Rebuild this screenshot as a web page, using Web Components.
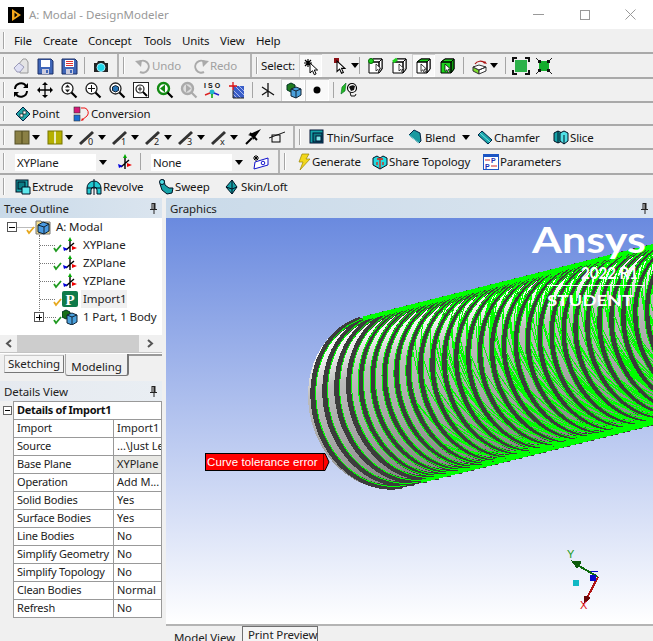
<!DOCTYPE html>
<html>
<head>
<meta charset="utf-8">
<title>DesignModeler</title>
<style>
  html, body { margin: 0; padding: 0; width: 653px; height: 641px; overflow: hidden; background: #f0f0f0; }
  body { font: 11.5px "Noto Sans", "Open Sans", sans-serif; color: #1a1a1a; }
  .main { display: flex; height: 443px; }
</style>
</head>
<body>
<title-bar></title-bar>

<tool-bar h="25">
  <tool-grip w="14"></tool-grip>
  <tool-item text="File" w="29"></tool-item><tool-item text="Create" w="45"></tool-item><tool-item text="Concept" w="56"></tool-item><tool-item text="Tools" w="38"></tool-item><tool-item text="Units" w="38"></tool-item><tool-item text="View" w="36"></tool-item><tool-item text="Help" w="40"></tool-item>
</tool-bar>

<tool-bar h="25">
  <tool-grip w="13"></tool-grip>
  <tool-item icon="new" w="24"></tool-item><tool-item icon="save" w="24"></tool-item><tool-item icon="saveas" w="23"></tool-item>
  <tool-sep w="9"></tool-sep>
  <tool-item icon="camera" w="24"></tool-item>
  <tool-end w="18"></tool-end>
  <tool-item icon="undo" text="Undo" w="58" off></tool-item><tool-item icon="redo" text="Redo" w="57" off></tool-item>
  <tool-end w="11"></tool-end>
  <tool-item text="Select:" w="38"></tool-item>
  <tool-item icon="pickstar" w="23" pressed></tool-item>
  <tool-sep w="11" blank></tool-sep>
  <tool-item icon="pickmode" w="26" caret></tool-item>
  <tool-sep w="9"></tool-sep>
  <tool-item icon="vertex" w="24"></tool-item><tool-item icon="edge" w="20"></tool-item><tool-item icon="face" w="23" pressed></tool-item>
  <tool-sep w="5" blank></tool-sep>
  <tool-item icon="body" w="23"></tool-item>
  <tool-sep w="9"></tool-sep>
  <tool-item icon="cuberot" w="33" caret></tool-item>
  <tool-sep w="8"></tool-sep>
  <tool-item icon="grow" w="23"></tool-item><tool-item icon="shrink" w="20"></tool-item>
</tool-bar>

<tool-bar h="24">
  <tool-grip w="13"></tool-grip>
  <tool-item icon="rotate" w="24"></tool-item><tool-item icon="pan" w="24"></tool-item><tool-item icon="zoomud" w="24"></tool-item><tool-item icon="zoomplus" w="24"></tool-item><tool-item icon="zoomcube" w="24"></tool-item><tool-item icon="zoombox" w="24"></tool-item><tool-item icon="prev" w="24"></tool-item><tool-item icon="next" w="23"></tool-item><tool-item icon="iso" w="25"></tool-item><tool-item icon="ruler" w="23"></tool-item>
  <tool-sep w="8"></tool-sep>
  <tool-item icon="triad" w="21"></tool-item><tool-item icon="cube" w="24" pressed></tool-item><tool-item icon="dot" w="24" pressed></tool-item>
  <tool-sep w="4" blank></tool-sep>
  <tool-sep w="8"></tool-sep>
  <tool-item icon="flat" w="24"></tool-item>
</tool-bar>

<tool-bar h="23">
  <tool-grip w="15"></tool-grip>
  <tool-item icon="point" text="Point" w="59"></tool-item><tool-item icon="conversion" text="Conversion" w="90"></tool-item>
</tool-bar>

<tool-bar h="24">
  <tool-grip w="14"></tool-grip>
  <tool-item icon="col1" w="33" caret></tool-item><tool-item icon="col2" w="33" caret></tool-item><tool-item icon="ln0" w="33" caret></tool-item><tool-item icon="ln1" w="33" caret></tool-item><tool-item icon="ln2" w="33" caret></tool-item><tool-item icon="ln3" w="33" caret></tool-item><tool-item icon="lnx" w="33" caret></tool-item><tool-item icon="arrow" w="24"></tool-item><tool-item icon="square" w="24"></tool-item>
  <tool-end w="16"></tool-end>
  <tool-item icon="thin" text="Thin/Surface" w="99" gap="2"></tool-item><tool-item icon="blend" text="Blend" w="69" caret></tool-item><tool-item icon="chamfer" text="Chamfer" w="76"></tool-item><tool-item icon="slice" text="Slice" w="60"></tool-item>
</tool-bar>

<tool-bar h="25">
  <tool-grip w="15"></tool-grip>
  <plane-combo value="XYPlane"></plane-combo>
  <tool-sep w="7" blank></tool-sep>
  <tool-item icon="plane" w="23"></tool-item>
  <tool-sep w="11"></tool-sep>
  <plane-combo value="None"></plane-combo>
  <tool-sep w="7" blank></tool-sep>
  <tool-item icon="newsketch" w="25"></tool-item>
  <tool-end w="18"></tool-end>
  <tool-item icon="bolt" text="Generate" w="76" gap="0"></tool-item><tool-item icon="share" text="Share Topology" w="111"></tool-item><tool-item icon="params" text="Parameters" w="90"></tool-item>
</tool-bar>

<tool-bar h="23" flat>
  <tool-grip w="15"></tool-grip>
  <tool-item icon="extrude" text="Extrude" w="71"></tool-item><tool-item icon="revolve" text="Revolve" w="72"></tool-item><tool-item icon="sweep" text="Sweep" w="66"></tool-item><tool-item icon="skin" text="Skin/Loft" w="80"></tool-item>
</tool-bar>

<div class="main">
  <left-pane>
    <pane-header label="Tree Outline" active></pane-header>
    <tree-view>
      <tree-row icon="modal" label="A: Modal" check="#e6a81e" root expander="minus"></tree-row>
      <tree-row icon="plane" label="XYPlane" check="#1f9a1f"></tree-row>
      <tree-row icon="plane" label="ZXPlane" check="#1f9a1f"></tree-row>
      <tree-row icon="plane" label="YZPlane" check="#1f9a1f"></tree-row>
      <tree-row icon="import" label="Import1" check="#e6a81e" selected></tree-row>
      <tree-row icon="part" label="1 Part, 1 Body" check="#1f9a1f" expander="plus" last></tree-row>
    </tree-view>
    <h-scroll></h-scroll>
    <mode-tabs></mode-tabs>
    <pane-header label="Details View" style="margin-top:5px"></pane-header>
    <details-table></details-table>
  </left-pane>
  <graphics-pane></graphics-pane>
</div>

<script>
const cursor = (x, y, s) => `<path transform="translate(${x} ${y}) scale(${s})" d="M0 0v10l2.500-2.300 1.800 4 1.800-.8-1.800-3.900h3.300z" fill="#fff" stroke="#000" stroke-width="1"/>`
const mag = inner => `<circle cx="6.500" cy="6.500" r="5.500" fill="#fff" stroke="#222" stroke-width="1.300"/><path d="M10.500 10.500l5 5" stroke="#000" stroke-width="2.200"/>${inner}`
const box = (fr, top, side, extra) => `<path d="M1 4l4-3h9v10l-3 4H1z" fill="${fr}" stroke="#000"/><path d="M1 4l4-3h9l-3 3z" fill="${top}" stroke="#000"/><path d="M11 4l3-3v10l-3 4z" fill="${side}" stroke="#000"/><path d="M1 4h10v11" fill="none" stroke="#000"/>${extra || ''}`
const floppy = label => `<path d="M1 1h13l2 2v13H1z" fill="#3f66b8" stroke="#1d2f66"/><rect x="4" y="2" width="9" height="7" fill="#fff"/>${label}<rect x="5" y="11" width="7" height="5" fill="#ccd"/><rect x="9" y="12" width="2" height="3" fill="#3f66b8"/>`
const slant = d => `<path d="M0 15L13 3" stroke="#333" stroke-width="3"/><text x="8" y="15.500" font-size="9" font-family="Noto Sans" fill="#222">${d}</text>`
const blueCube = `<path d="M3 6l5-3 6 2v7l-5 3-6-2z" fill="#4a9ae0" stroke="#123"/><path d="M3 6l6 2 5-3M9 8v7" fill="none" stroke="#123"/>`
const axes = `<path d="M8 4v11M4 13l8-7" stroke="#000" stroke-width="1.400"/><path d="M8 0l-2 4h4z" fill="#0a0"/><path d="M1 10l5 2-4 2z" fill="#00d"/><path d="M15 11l-5-2v4z" fill="#e00"/>`

const ICONS = {
  new: `<path d="M5 7l5-6h3l2 3v11H7z" fill="#e4e4e4" stroke="#999"/><path d="M1 10l5-5 5 4-4 5H4z" fill="#dfe0f4" stroke="#9a9ab8"/>`,
  save: floppy(''),
  saveas: floppy(`<path d="M5 3.500h7M5 5.500h7M5 7.500h7" stroke="#d33" stroke-width="1"/>`),
  camera: `<path d="M1 5h3l1-2h6l1 2h3v9H1z" fill="#222"/><circle cx="8" cy="9.500" r="4" fill="#1fd6e8" stroke="#aef"/>`,
  undo: `<path d="M4 4a6 6 0 1 1 1 10" fill="none" stroke="#aaa" stroke-width="2"/><path d="M0 3l7-1-1 7z" fill="#aaa"/>`,
  redo: `<path d="M12 4a6 6 0 1 0-1 10" fill="none" stroke="#aaa" stroke-width="2"/><path d="M16 3l-7-1 1 7z" fill="#aaa"/>`,
  pickstar: `<path d="M5 1v8M1 5h8M2 2l6 6M8 2L2 8" stroke="#000" stroke-width="1.200"/>${cursor(7, 5, 1)}`,
  pickmode: `<rect x="1" y="0" width="5" height="5" fill="#8b0f14"/>${cursor(4, 3, 1.050)}`,
  vertex: box('#fff', '#fff', '#fff', `<circle cx="3" cy="3" r="2.500" fill="#1dd41d" stroke="#060"/>${cursor(8, 6, .7)}`),
  edge: box('#fff', '#fff', '#fff', `<path d="M1 4l4-3" stroke="#1dd41d" stroke-width="3"/>${cursor(7, 6, .7)}`),
  face: box('#fff', '#1dd41d', '#fff', cursor(5, 6, .75)),
  body: box('#1dd41d', '#1dd41d', '#0d9d0d', cursor(5, 6, .75)),
  cuberot: `<path d="M3 6a6 5 0 0 1 10-1" fill="none" stroke="#a11" stroke-width="1.200"/><path d="M15 6l-4-1 2-2z" fill="#a11"/><path d="M1 9l6 3v4l-6-3z" fill="#7ddc2c" stroke="#333"/><path d="M7 12l7-3v4l-7 3zM1 9l6-2 7 2-7 3z" fill="#fff" stroke="#333"/>`,
  grow: `<rect x="2" y="2" width="12" height="12" fill="#2cb24a"/><path d="M0 4V0h4M12 0h4v4M16 12v4h-4M4 16H0v-4" fill="none" stroke="#111" stroke-width="2"/>`,
  shrink: `<path d="M0 0l16 16M16 0L0 16" stroke="#222"/><rect x="3" y="3" width="10" height="10" fill="#13ad2c"/><path d="M2 2h3v3H2zM11 2h3v3h-3zM2 11h3v3H2zM11 11h3v3h-3z" fill="#111"/>`,
  rotate: `<path d="M2 7a6 6 0 0 1 11-3M14 9a6 6 0 0 1-11 3" fill="none" stroke="#000" stroke-width="2"/><path d="M15 1v5h-5zM1 15v-5h5z" fill="#000"/>`,
  pan: `<path d="M8 1v14M1 8h14" stroke="#000" stroke-width="1.300"/><path d="M8 0l-3 3h6zM8 16l-3-3h6zM0 8l3-3v6zM16 8l-3-3v6z" fill="#000"/>`,
  zoomud: mag(`<path d="M6.500 2.500l-2.500 3h5zM6.500 10.500l-2.500-3h5z" fill="#222"/>`),
  zoomplus: mag(`<path d="M6.500 3v7M3 6.500h7" stroke="#111"/>`),
  zoomcube: mag(`<path d="M3.500 5l3-1.500 3 1.500v3.500l-3 1.500-3-1.500z" fill="#2b77b8" stroke="#123"/>`),
  zoombox: `<rect x=".5" y=".5" width="15" height="15" fill="#fff" stroke="#222"/><circle cx="7" cy="7" r="4" fill="none" stroke="#222" stroke-width="1.200"/><path d="M10 10l4 4" stroke="#000" stroke-width="2"/><path d="M7 4.500v5M5 7h4" stroke="#222"/>`,
  prev: `<circle cx="6.500" cy="6.500" r="5.500" fill="#fff" stroke="#138a13" stroke-width="2.400"/><path d="M10.500 10.500l5 5" stroke="#000" stroke-width="2.200"/><path d="M3 6.500l5-4v8z" fill="#138a13"/>`,
  next: `<circle cx="6.500" cy="6.500" r="5.500" fill="#ddd" stroke="#aaa" stroke-width="2.400"/><path d="M10.500 10.500l5 5" stroke="#aaa" stroke-width="2.200"/><path d="M10 6.500l-5-4v8z" fill="#aaa"/>`,
  iso: `<text x="0" y="6" font-size="7" font-weight="700" font-family="Liberation Sans" fill="#111" textLength="16">ISO</text><circle cx="8" cy="10" r="2.500" fill="#22b5cc"/><path d="M1 13l5-2" stroke="#d22" stroke-width="1.500"/><path d="M15 13l-5-2" stroke="#22c" stroke-width="1.500"/><path d="M8 12v4" stroke="#0a0" stroke-width="1.500"/>`,
  ruler: `<path d="M4 4h11v12H4z" fill="#3a5ec8"/><path d="M6 4l9 9M10 4l5 5M4 8l8 8M4 12l4 4" stroke="#a9b9ee"/><path d="M0 4h8M4 0v8" stroke="#d11" stroke-width="1.300"/><path d="M4 8v8h11" fill="none" stroke="#222"/>`,
  triad: `<path d="M8 1v14M2 5l12 8M2 13l6-4" stroke="#111" stroke-width="1.300"/>`,
  cube: `<path d="M2 3l4-2 4 2v5l-4 2-4-2z" fill="#1f7a1f" stroke="#032"/><path d="M6 7l5-2 5 2v6l-5 3-5-2z" fill="#4aa0dc" stroke="#123"/><path d="M6 7l5 2 5-2M11 9v7" fill="none" stroke="#123"/>`,
  dot: `<circle cx="8" cy="8" r="3.500" fill="#000"/>`,
  flat: `<path d="M0 12l1-7 4-4-1 8z" fill="#23b823" stroke="#062" stroke-width=".6"/><circle cx="11" cy="6" r="4.500" fill="#fff" stroke="#000" stroke-width="1.200"/><path d="M8 5a4 3 0 0 1 6-1l-1 4-3 1z" fill="#111"/><path d="M9 10l1 4h4l1-2" fill="none" stroke="#111"/>`,
  point: `<path d="M8 1l7 7-7 7-7-7z" fill="#23a5a8" stroke="#024"/><rect x="5" y="8" width="3" height="3" fill="#fff" stroke="#000" stroke-width=".6"/><rect x="8" y="5" width="3" height="3" fill="#fff" stroke="#000" stroke-width=".6"/>`,
  conversion: `<rect x="0" y="1" width="6" height="6" fill="#d41a78" stroke="#333" stroke-width=".6"/><rect x="0" y="9" width="6" height="6" fill="#1a6fd4" stroke="#333" stroke-width=".6"/><path d="M7 2h4a5 5 0 0 1 2 8l-5 4" fill="none" stroke="#e11"/><path d="M7 15l1-3 2 2z" fill="#e11"/>`,
  col1: `<rect x="1" y="2" width="14" height="13" fill="#8a8045"/><path d="M8 2v13" stroke="#4a4515"/><rect x="1" y="2" width="14" height="13" fill="none" stroke="#555028"/>`,
  col2: `<rect x="1" y="2" width="14" height="13" fill="#b5b000"/><path d="M8 2v13" stroke="#fff" stroke-width="1.500"/><rect x="1" y="2" width="14" height="13" fill="none" stroke="#777400"/>`,
  ln0: slant('0'), ln1: slant('1'), ln2: slant('2'), ln3: slant('3'), lnx: slant('x'),
  arrow: `<path d="M1 15l6-6" stroke="#000" stroke-width="2"/><path d="M16 0L3 6l3 1 1 1 1 3z" fill="#000"/><path d="M5 4l7 7" stroke="#000" stroke-width="2"/>`,
  square: `<rect x="3" y="6" width="8" height="7" fill="none" stroke="#000"/><path d="M0 9l16-6" stroke="#000" stroke-width=".9"/>`,
  thin: `<rect x="1" y="1" width="13" height="13" fill="#16a3a8" stroke="#013"/><rect x="4" y="4" width="9" height="9" fill="#0c7f86" stroke="#013"/><rect x="7" y="7" width="5" height="5" fill="#7fe6e8" stroke="#013"/>`,
  blend: `<path d="M1 6l5-5 6 3 1 8-2 2z" fill="#1b9aa0" stroke="#024"/><path d="M1 6l10 8" stroke="#7fe6e8"/>`,
  chamfer: `<path d="M1 6l4-4 10 9-4 4z" fill="#16a3a8" stroke="#024"/><path d="M3 4l10 9" stroke="#7fe6e8"/>`,
  slice: `<path d="M1 4l4-2 4 2v8l-4 2-4-2z" fill="#16a3a8" stroke="#012"/><path d="M7 4l4-2 4 2v8l-4 3-4-3z" fill="#4fe0e6" stroke="#012"/><path d="M5 2v12M11 6v9" stroke="#012"/>`,
  plane: axes,
  newsketch: `<path d="M2 8l13-4v7L1 15z" fill="#fff" stroke="#11c"/><circle cx="10" cy="9" r="1.800" fill="none" stroke="#11c"/><path d="M3 1v6M0 4h6M1 2l4 4M5 2L1 6" stroke="#000"/>`,
  bolt: `<path d="M6 0h7l-3 5h4L4 16l3-8H3z" fill="#f2d71c" stroke="#9a8400" stroke-width=".7"/>`,
  share: `<path d="M1 4l4-2 3 2 3-2 4 2v7l-7 4-7-4z" fill="#22dbe0" stroke="#012"/><path d="M5 5h6M8 5v9M5 8v3M11 8v3" stroke="#d21" stroke-width="1.300" fill="none"/>`,
  params: `<rect x=".5" y=".5" width="15" height="15" fill="#fff" stroke="#1c55c4"/><rect x="1" y="1" width="14" height="2" fill="#1c55c4"/><text x="8" y="9" font-size="7" font-weight="700" font-family="Liberation Sans" fill="#1c2fb0">P</text><text x="2" y="15" font-size="7" font-weight="700" font-family="Liberation Sans" fill="#1c2fb0">P</text><path d="M2 6h5M8 12h6" stroke="#c22"/>`,
  extrude: `<rect x="1" y="1" width="12" height="12" fill="#16a3a8" stroke="#012"/><rect x="3" y="3" width="7" height="7" fill="#0c7f86" stroke="#012"/><path d="M7 8h8v7H7z" fill="#5fe8ec" stroke="#012"/>`,
  revolve: `<path d="M1 15V9a7 7 0 0 1 14 0v6h-4v-4a3 3 0 0 0-6 0v4z" fill="#22c8d0" stroke="#012"/><path d="M8 0v16M1 9h14" stroke="#012"/>`,
  sweep: `<path d="M3 1h3l1 5 4 3h4l-1 5-5 1-5-4-2-6z" fill="#16a3a8" stroke="#012"/><circle cx="4" cy="3" r="2.500" fill="#4fe0e6" stroke="#012"/>`,
  skin: `<path d="M8 1l5 7-5 7-6-7z" fill="#16a3a8" stroke="#012"/><path d="M8 1v14M2 8l6 2 5-2" fill="none" stroke="#012"/>`,
  modal: `<path d="M1 2h5l1 1h8v12H1z" fill="#f2dc8a" stroke="#777"/>${blueCube}`,
  import: `<rect x="0" y="0" width="16" height="16" rx="2" fill="#0f7a4a"/><text x="8" y="14" font-size="15" font-weight="700" font-family="Liberation Serif" text-anchor="middle" fill="#fff">P</text>`,
  part: `<path d="M0 3l4-2 4 2v5l-4 2-4-2z" fill="#176f17" stroke="#032"/><path d="M5 6l5-2 5 2v7l-5 3-5-2z" fill="#4aa0dc" stroke="#123"/><path d="M5 6l5 2 5-2M10 8v8" fill="none" stroke="#123"/>`
}

class TitleBar extends HTMLElement {
  constructor () {
    super()
    this.attachShadow({ mode: 'open' }).innerHTML = `
      <style>
        :host { display: flex; align-items: center; height: 29px; background: #fff; color: #999; font-size: 11.500px; }
        svg { flex: none; display: block; }
        span { margin-left: 5px; flex: 1; }
      </style>
      <svg width="16" height="16" style="margin-left:8px"><rect width="16" height="16" fill="#000"/><path d="M4 2l9 6-9 6z" fill="#f5a81c"/><path d="M6.500 5.500l3 2.500-3 2.500z" fill="#000"/></svg>
      <span>A: Modal - DesignModeler</span>
      <svg width="11" height="2" style="margin-right:36px"><rect width="11" height="1" y="0" fill="#999"/></svg>
      <svg width="10" height="10" style="margin-right:35px"><rect x=".5" y=".5" width="9" height="9" fill="none" stroke="#999"/></svg>
      <svg width="11" height="11" style="margin-right:17px"><path d="M.5.500l10 10M10.500.500l-10 10" stroke="#999"/></svg>`
  }
}
customElements.define('title-bar', TitleBar)

class ToolBar extends HTMLElement {
  constructor () {
    super()
    this.attachShadow({ mode: 'open' }).innerHTML = `
      <style>
        :host { display: flex; align-items: stretch; box-sizing: border-box; background: #f0f0f0; border-bottom: 2px solid #a9a9a9; white-space: nowrap; }
        :host([flat]) { border-bottom: 0; }
      </style>
      <slot></slot>`
  }

  connectedCallback () {
    this.style.height = this.getAttribute('h') + 'px'
  }
}
customElements.define('tool-bar', ToolBar)

class ToolGrip extends HTMLElement {
  constructor () {
    super()
    this.attachShadow({ mode: 'open' }).innerHTML = `
      <style>
        :host { display: block; flex: none; position: relative; }
        i { display: block; margin: 3px 0 3px 3px; width: 1px; height: calc(100% - 6px); background: #a5a5a5; box-shadow: 1px 0 #fff; }
      </style>
      <i></i>`
  }

  connectedCallback () {
    this.style.width = this.getAttribute('w') + 'px'
  }
}
customElements.define('tool-grip', ToolGrip)

class ToolEnd extends HTMLElement {
  constructor () {
    super()
    this.attachShadow({ mode: 'open' }).innerHTML = `
      <style>
        :host { display: block; flex: none; box-sizing: border-box; border-left: 2px solid #b4b4b4; }
        i { display: block; margin: 3px 0 3px 4px; width: 1px; height: calc(100% - 6px); background: #a5a5a5; box-shadow: 1px 0 #fff; }
      </style>
      <i></i>`
  }

  connectedCallback () {
    this.style.width = this.getAttribute('w') + 'px'
  }
}
customElements.define('tool-end', ToolEnd)

class ToolSep extends HTMLElement {
  constructor () {
    super()
    this.attachShadow({ mode: 'open' }).innerHTML = `
      <style>
        :host { display: block; flex: none; }
        i { display: block; margin-top: 3px; width: 1px; height: calc(100% - 6px); background: #a5a5a5; }
        :host([blank]) i { display: none; }
      </style>
      <i></i>`
  }

  connectedCallback () {
    this.style.width = this.getAttribute('w') + 'px'
  }
}
customElements.define('tool-sep', ToolSep)

class ToolItem extends HTMLElement {
  constructor () {
    super()
    this.attachShadow({ mode: 'open' })
  }

  connectedCallback () {
    const icon = this.getAttribute('icon')
    const text = this.getAttribute('text')
    const gap = this.getAttribute('gap') || 1
    this.style.width = this.getAttribute('w') + 'px'
    this.shadowRoot.innerHTML = `
      <style>
        :host { display: flex; flex: none; align-items: center; box-sizing: border-box; height: 100%; font-size: 11.500px; letter-spacing: -.15px; color: #151515; }
        :host([off]) { color: #a0a0a0; }
        :host([pressed]) { background: #f9f9f9; box-shadow: inset 1px 1px #d0d0d0, inset -1px -1px #fff; justify-content: center; }
        svg { display: block; flex: none; overflow: visible; }
        span { margin-left: ${icon ? gap : 0}px; }
        .caret { margin-left: 2px; }
        :host([text][caret]) .caret { margin-left: 7px; }
      </style>
      ${icon ? `<svg width="16" height="16" viewBox="0 0 16 16">${ICONS[icon]}</svg>` : ''}
      ${text ? `<span>${text}</span>` : ''}
      ${this.hasAttribute('caret') ? '<svg class="caret" width="8" height="5"><path d="M0 0h8L4 5z" fill="#000"/></svg>' : ''}`
  }
}
customElements.define('tool-item', ToolItem)

class PlaneCombo extends HTMLElement {
  constructor () {
    super()
    this.attachShadow({ mode: 'open' })
  }

  connectedCallback () {
    this.shadowRoot.innerHTML = `
      <style>
        :host { display: flex; flex: none; align-items: center; width: 95px; height: 17px; margin-top: 4px; background: #fff; font-size: 11.500px; letter-spacing: -.25px; }
        span { flex: 1; padding-left: 2px; }
        b { display: flex; align-items: center; justify-content: center; width: 14px; height: 100%; background: #f0f0f0; }
      </style>
      <span>${this.getAttribute('value')}</span>
      <b><svg width="8" height="5"><path d="M0 0h8L4 5z" fill="#000"/></svg></b>`
  }
}
customElements.define('plane-combo', PlaneCombo)

class LeftPane extends HTMLElement {
  constructor () {
    super()
    this.attachShadow({ mode: 'open' }).innerHTML = `
      <style>:host { display: block; flex: none; width: 162px; margin-right: 4px; background: #f0f0f0; }</style>
      <slot></slot>`
  }
}
customElements.define('left-pane', LeftPane)

class PaneHeader extends HTMLElement {
  constructor () {
    super()
    this.attachShadow({ mode: 'open' })
  }

  connectedCallback () {
    this.shadowRoot.innerHTML = `
      <style>
        :host { display: flex; align-items: center; justify-content: space-between; height: 20px; padding: 0 5px 0 4px; font-size: 11.500px; letter-spacing: -.1px; background: linear-gradient(90deg, #e6eaf0, #e9eef3); color: #222; }
        :host([active]) { background: linear-gradient(90deg, #c9dae9, #dbe5ef); }
        svg { display: block; flex: none; }
      </style>
      <span>${this.getAttribute('label')}</span>
      <svg width="7" height="11"><path d="M1.500 0h4v6h1.500v1h-2.500v4h-1V7H0V6h1.500z" fill="#222"/><rect x="2.500" y="1" width="1" height="5" fill="#ddd"/></svg>`
  }
}
customElements.define('pane-header', PaneHeader)

class TreeView extends HTMLElement {
  constructor () {
    super()
    this.attachShadow({ mode: 'open' }).innerHTML = `
      <style>:host { display: block; height: 117px; background: #fff; }</style>
      <slot></slot>`
  }
}
customElements.define('tree-view', TreeView)

class TreeRow extends HTMLElement {
  constructor () {
    super()
    this.attachShadow({ mode: 'open' })
  }

  connectedCallback () {
    const root = this.hasAttribute('root')
    const last = this.hasAttribute('last')
    const expander = this.getAttribute('expander')
    const ex = root ? 7 : 34
    const check = this.getAttribute('check')
    const checkX = root ? 27 : 54
    const iconX = root ? 35 : 62
    const w = root ? 54 : 81
    let lines = ''
    const dots = 'stroke="#777" stroke-dasharray="1 1" fill="none"'
    if (root) {
      lines = `<path d="M17.500 9.500H35" ${dots}/><path d="M39.500 15V18" ${dots}/>`
    } else {
      lines = `<path d="M39.500 0V${last ? 9 : 18}" ${dots}/><path d="M${expander ? 45 : 40} 9.500H56" ${dots}/>`
    }
    let box = ''
    if (expander) {
      box = `<rect x="${ex + .5}" y="4.500" width="9" height="9" fill="#fff" stroke="#555"/><path d="M${ex + 2} 9.500h6" stroke="#000"/>`
      if (expander === 'plus') box += `<path d="M${ex + 5}.500 6.500v6" stroke="#000"/>`
    }
    this.shadowRoot.innerHTML = `
      <style>
        :host { display: flex; align-items: center; height: 18px; font-size: 11.500px; letter-spacing: -.1px; color: #222; white-space: nowrap; }
        svg { display: block; flex: none; }
        span { padding: 0 1px 0 2px; line-height: 18px; }
        :host([selected]) span { background: #f0f0f0; }
      </style>
      <svg width="${w}" height="18" viewBox="0 0 ${w} 18">
        ${lines}${box}
        <svg x="${iconX}" y="1" width="16" height="16" viewBox="0 0 16 16">${ICONS[this.getAttribute('icon')]}</svg>
        <path d="M${checkX} 12l2 3 5-6" fill="none" stroke="${check}" stroke-width="1.800"/>
      </svg>
      <span>${this.getAttribute('label')}</span>`
  }
}
customElements.define('tree-row', TreeRow)

class HScroll extends HTMLElement {
  constructor () {
    super()
    this.attachShadow({ mode: 'open' }).innerHTML = `
      <style>
        :host { display: flex; align-items: stretch; height: 17px; background: #f0f0f0; }
        div { width: 17px; display: flex; align-items: center; justify-content: center; }
        i { flex: 1; background: #cdcdcd; }
        svg { display: block; }
      </style>
      <div><svg width="7" height="9"><path d="M6 1L2 4.500 6 8" fill="none" stroke="#555" stroke-width="2"/></svg></div>
      <i></i>
      <div style="width:23px"><svg width="7" height="9"><path d="M1 1l4 3.500L1 8" fill="none" stroke="#555" stroke-width="2"/></svg></div>`
  }
}
customElements.define('h-scroll', HScroll)

class ModeTabs extends HTMLElement {
  constructor () {
    super()
    this.attachShadow({ mode: 'open' }).innerHTML = `
      <style>
        :host { display: flex; align-items: flex-start; box-sizing: border-box; height: 24px; padding-left: 4px; font-size: 11.500px; letter-spacing: -.1px; color: #222; border-top: 1px solid #c4c4c4; box-shadow: inset 0 1px #fff; }
        div { box-sizing: border-box; text-align: center; }
        .a { width: 60px; height: 18px; margin-top: 2px; border: 1px solid #c8c8c8; border-bottom-color: #777; border-right-color: #777; line-height: 16px; background: #f4f4f4; }
        .b { width: 64px; height: 22px; margin: 1px 0 0 1px; border-right: 2px solid #777; border-bottom: 1px solid #777; border-left: 1px solid #aaa; border-radius: 0 0 3px 3px; line-height: 26px; background: #f0f0f0; }
        i { flex: 1; height: 3px; margin-top: 0; border-bottom: 2px solid #999; box-sizing: border-box; }
      </style>
      <div class="a">Sketching</div><div class="b">Modeling</div><i></i>`
  }
}
customElements.define('mode-tabs', ModeTabs)

const DETAILS = [
  ['Import', 'Import1'], ['Source', '...\\Just Leg'], ['Base Plane', 'XYPlane', 1], ['Operation', 'Add M...'],
  ['Solid Bodies', 'Yes'], ['Surface Bodies', 'Yes'], ['Line Bodies', 'No'], ['Simplify Geometry', 'No'],
  ['Simplify Topology', 'No'], ['Clean Bodies', 'Normal'], ['Refresh', 'No']
]

class DetailsTable extends HTMLElement {
  constructor () {
    super()
    const rows = DETAILS.map(r => `<div class="k">${r[0]}</div><div class="v${r[2] ? ' s' : ''}">${r[1]}</div>`).join('')
    this.attachShadow({ mode: 'open' }).innerHTML = `
      <style>
        :host { display: flex; align-items: flex-start; background: #f0f0f0; }
        svg { display: block; flex: none; margin: 5px 1px 0 3px; }
        .t { display: grid; grid-template-columns: 100px 48px; grid-auto-rows: 18px; width: 149px; box-sizing: border-box; background: #fff; border-top: 1px solid #999; border-left: 1px solid #999; font-size: 11px; color: #222; }
        .t > div { box-sizing: border-box; border-right: 1px solid #999; border-bottom: 1px solid #999; padding-left: 3px; line-height: 16px; overflow: hidden; white-space: nowrap; }
        .k { letter-spacing: -.2px; }
        .h { grid-column: 1 / 3; font-weight: 700; color: #111; letter-spacing: -.3px; }
        .s { background: #e8e8e4; }
      </style>
      <svg width="9" height="9"><rect x=".5" y=".5" width="8" height="8" fill="#fff" stroke="#666"/><path d="M2 4.500h5" stroke="#000"/></svg>
      <div class="t"><div class="h">Details of Import1</div>${rows}</div>`
  }
}
customElements.define('details-table', DetailsTable)

class GraphicsPane extends HTMLElement {
  constructor () {
    super()
    this.attachShadow({ mode: 'open' }).innerHTML = `
      <style>
        :host { display: flex; flex-direction: column; flex: 1; min-width: 0; background: #f0f0f0; }
        .view { height: 406px; flex: none; }
        .tabs { display: flex; align-items: flex-start; box-sizing: border-box; height: 17px; border-top: 2px solid #b4b4b4; font-size: 11.500px; letter-spacing: -.1px; color: #222; }
        .tabs div { white-space: nowrap; }
        .on { margin: 4px 0 0 8px; width: 68px; }
        .pv { box-sizing: border-box; width: 76px; height: 20px; border: 1px solid #707070; border-bottom: 0; padding-left: 5px; line-height: 16px; background: #f4f4f4; }
      </style>
      <pane-header label="Graphics" active></pane-header>
      <model-view class="view"></model-view>
      <div class="tabs"><div class="on">Model View</div><div class="pv">Print Preview</div></div>`
  }
}
customElements.define('graphics-pane', GraphicsPane)

class ModelView extends HTMLElement {
  constructor () {
    super()
    this.attachShadow({ mode: 'open' }).innerHTML = `
      <style>
        :host { display: block; position: relative; overflow: hidden; background: linear-gradient(#6a8adf, #ffffff); }
        svg { position: absolute; left: 0; top: 0; display: block; }
        .flag { position: absolute; left: 39px; top: 235px; display: flex; height: 18px; font: 11.500px "Liberation Sans", sans-serif; letter-spacing: .1px; color: #fff; }
        .flag span { box-sizing: border-box; background: #f00; border: 1px solid #000; border-right: 0; padding: 0 0 0 1px; line-height: 16px; width: 118px; white-space: nowrap; }
        .flag svg { position: static; }
      </style>
      ${this.scene()}
      <div class="flag"><span>Curve tolerance error</span><svg width="7" height="18"><path d="M0 .5h2l4 8.500-4 8.500H0z" fill="#f00" stroke="#000" /></svg></div>`
  }

  // rings are half ellipses that walk down the cylinder axis
  scene () {
    const u = [0.97, -0.2426]
    const n = [0.2426, 0.97]
    const a = 86
    const b = 70
    const c0 = [380, 403]
    const step = 12.3
    const ringPt = (i, t, shift) => {
      const cx = c0[0] + u[0] * (i * step + shift)
      const cy = c0[1] + u[1] * (i * step + shift)
      return [cx - u[0] * b * Math.cos(t) + n[0] * a * Math.sin(t), cy - u[1] * b * Math.cos(t) + n[1] * a * Math.sin(t)]
    }
    const ring = (i, shift) => {
      const pts = []
      for (let k = 0; k <= 60; k++) {
        const p = ringPt(i, -1.54 + 3.08 * k / 60, shift)
        pts.push(p[0].toFixed(1) + ' ' + p[1].toFixed(1))
      }
      return 'M' + pts.join('L')
    }
    // small repeatable jitter so the mesh lines do not line up in a band
    let seed = 7
    const rnd = () => {
      seed = (seed * 16807) % 2147483647
      return seed / 2147483647
    }
    let dark = ''
    let green = ''
    let hatch = ''
    for (let i = 0; i < 36; i++) {
      dark += ring(i, 4)
      green += ring(i, 7)
      if (i > 3) green += ring(i, 1.5)
      if (i >= 8) {
        const count = Math.min(34, 10 + (i - 8) * 3)
        for (let k = 0; k < count; k++) {
          const t = -1.5 + 3 * rnd()
          const p = ringPt(i, t, 7)
          const q = ringPt(i + 1, t + 0.3, 1.5)
          hatch += `M${p[0].toFixed(1)} ${p[1].toFixed(1)}L${q[0].toFixed(1)} ${q[1].toFixed(1)}`
        }
      }
    }
    const top = [c0[0] - n[0] * a, c0[1] - n[1] * a]
    const bot = [c0[0] + n[0] * a, c0[1] + n[1] * a]
    const far = 400
    const body = `M${top[0]} ${top[1]}L${top[0] + u[0] * far} ${top[1] + u[1] * far}L${bot[0] + u[0] * far} ${bot[1] + u[1] * far}L${bot[0]} ${bot[1]}Z`
    return `<svg width="487" height="406" viewBox="166 218 487 406">
      <defs>
        <linearGradient id="sh" gradientUnits="userSpaceOnUse" x1="${top[0]}" y1="${top[1]}" x2="${bot[0]}" y2="${bot[1]}">
          <stop offset="0" stop-color="#ffffff"/><stop offset=".12" stop-color="#f0f0f0"/><stop offset=".28" stop-color="#bcbcbc"/><stop offset=".6" stop-color="#a4a4a4"/><stop offset="1" stop-color="#808080"/>
        </linearGradient>
      </defs>
      <g shape-rendering="crispEdges">
        <ellipse cx="${c0[0]}" cy="${c0[1]}" rx="${b + 1}" ry="${a}" transform="rotate(-14 ${c0[0]} ${c0[1]})" fill="url(#sh)"/>
        <path d="${body}" fill="url(#sh)"/>
        <path d="${dark}" fill="none" stroke="#3c3c3c" stroke-width="5"/>
        <path d="${green}" fill="none" stroke="#00ff00" stroke-width="1"/>
        <path d="${hatch}" fill="none" stroke="#00ff00" stroke-width="1"/>
        <path d="M${top[0] + 4} ${top[1] - 1}L${top[0] + u[0] * far} ${top[1] + u[1] * far}" stroke="#00ff00" stroke-width="4"/>
        <path d="M${bot[0] + 20} ${bot[1] - 5}L${bot[0] + u[0] * far} ${bot[1] + u[1] * far}" stroke="#00ff00" stroke-width="3"/>
      </g>
      <g fill="#fff" font-family="Lato, 'Open Sans', sans-serif" font-weight="700">
        <text x="532" y="253" font-size="37" textLength="114" lengthAdjust="spacingAndGlyphs">Ansys</text>
        <text x="581" y="279" font-size="17" textLength="57" lengthAdjust="spacingAndGlyphs">2022 R1</text>
        <rect x="547" y="285" width="98" height="1"/>
        <text x="547" y="306" font-size="15.500" textLength="86" lengthAdjust="spacingAndGlyphs">STUDENT</text>
      </g>
      <g fill="none" shape-rendering="crispEdges">
        <path d="M598 577L574 563" stroke="#0d6b0d" stroke-width="2"/>
        <path d="M572 561l9 1-4 6z" fill="#0d5c0d" stroke="#0d5c0d"/>
        <path d="M598 577L587 598" stroke="#b01414" stroke-width="2"/>
        <path d="M585 596l5 2-6 5z" fill="#6a0808" stroke="#6a0808"/>
        <circle cx="593" cy="578" r="3.500" fill="#0808c8"/>
        <path d="M591 571h7" stroke="#0808c8"/>
        <circle cx="576" cy="583" r="3.500" fill="#10b8c4"/>
      </g>
      <text x="567" y="558" font-size="11" font-family="Liberation Sans" fill="#1a9a1a">Y</text>
      <text x="580" y="609" font-size="11" font-family="Liberation Sans" fill="#e01010">X</text>
    </svg>`
  }
}
customElements.define('model-view', ModelView)
</script>
</body>
</html>
